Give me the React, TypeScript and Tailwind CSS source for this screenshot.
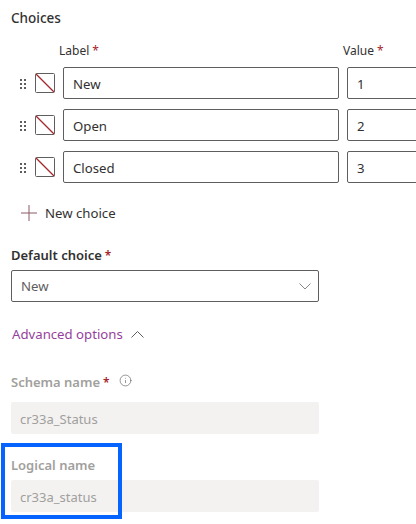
import { Info } from "lucide-react";

const choices = [
  { label: "New", value: "1" },
  { label: "Open", value: "2" },
  { label: "Closed", value: "3" },
];

function Required() {
  return <span className="text-[#a4262c] ml-[3px] text-[12px]">*</span>;
}

function DragDots() {
  return (
    <svg width="6" height="10" viewBox="0 0 6 10" className="fill-[#605e5c] shrink-0 mt-[2px]">
      {[0, 4, 8].map((y) => (
        <g key={y}>
          <rect x="0" y={y} width="2" height="2" />
          <rect x="4" y={y} width="2" height="2" />
        </g>
      ))}
    </svg>
  );
}

function Swatch() {
  return (
    <svg width="20" height="20" viewBox="0 0 20 20" className="shrink-0 ml-[9px] mr-2">
      <rect x="0.5" y="0.5" width="19" height="19" rx="1" fill="#fff" stroke="#605e5c" />
      <path d="M1 1 L19 19" stroke="#a4262c" strokeWidth="1.2" />
    </svg>
  );
}

function ChoiceRow({ label, value }: { label: string; value: string }) {
  return (
    <div className="flex items-center h-8 pl-5">
      <DragDots />
      <Swatch />
      <div className="w-[276px] h-8 shrink-0 border border-[#605e5c] rounded-[2px] pl-[9px] pt-[2px] flex items-center text-[#323130]">
        {label}
      </div>
      <div className="w-[100px] h-8 shrink-0 ml-2 border border-[#605e5c] rounded-[2px] pl-[9px] pt-[2px] flex items-center text-[#323130]">
        {value}
      </div>
    </div>
  );
}

function ReadOnlyField({ value }: { value: string }) {
  return (
    <div className="w-[308px] h-8 bg-[#f3f2f1] rounded-[2px] pl-[9px] pt-[2px] flex items-center text-[13px] text-[#a19f9d]">
      {value}
    </div>
  );
}

export default function App() {
  return (
    <div
      className="relative w-[416px] h-[524px] overflow-hidden bg-white text-[13.2px] leading-5 text-[#323130]"
      style={{ fontFamily: '"Noto Sans", sans-serif' }}
    >
      <div className="pt-2">
        <div className="pl-[11px] font-medium h-5 text-[13.5px]">Choices</div>

        <div className="flex mt-[13px] h-5 text-[#323130] text-[12px]">
          <div className="pl-[59px] w-[343px] shrink-0">
            Label<Required />
          </div>
          <div>
            Value<Required />
          </div>
        </div>

        <div className="flex flex-col gap-[10px] mt-[6px] w-[480px]">
          {choices.map((c) => (
            <ChoiceRow key={c.value} label={c.label} value={c.value} />
          ))}
        </div>

        <div className="flex items-center h-8 pl-[21px] mt-[14px] gap-2 text-[#323130]">
          <svg width="16" height="16" viewBox="0 0 16 16" className="text-[#8a5a66] shrink-0" fill="none" stroke="currentColor" strokeWidth="1">
            <path d="M8 0 V16 M0 8 H16" />
          </svg>
          <span>New choice</span>
        </div>

        <div className="pl-[11px] mt-[16px]">
          <div className="font-semibold h-5 text-[13px]">
            Default choice<Required />
          </div>
          <div className="w-[308px] h-8 mt-[5px] border border-[#605e5c] rounded-[2px] pl-[9px] pr-[7px] flex items-center justify-between text-[#605e5c]">
            <span>New</span>
            <svg width="12" height="7" viewBox="0 0 12 7" fill="none" stroke="#8a8886" strokeWidth="1">
              <path d="M0.5 0.5 L6 6 L11.5 0.5" />
            </svg>
          </div>

          <div className="flex items-center gap-2 mt-[22px] h-5 pl-px text-[#953f9c]">
            <span>Advanced options</span>
            <svg width="13" height="7" viewBox="0 0 13 7" fill="none" stroke="#605e5c" strokeWidth="1">
              <path d="M0.5 6.5 L6.5 0.5 L12.5 6.5" />
            </svg>
          </div>

          <div className="flex items-center mt-[28px] h-5 font-semibold text-[13px] text-[#a19f9d]">
            <span>
              Schema name<Required />
            </span>
            <Info size={13} strokeWidth={1.2} className="ml-[9px] -mt-[3px] text-[#605e5c]" />
          </div>
          <div className="mt-[10px]">
            <ReadOnlyField value="cr33a_Status" />
          </div>

          <div className="font-semibold text-[13px] h-5 mt-[21px] text-[#a19f9d]">Logical name</div>
          <div className="mt-[5px]">
            <ReadOnlyField value="cr33a_status" />
          </div>
        </div>
      </div>

      {/* blue highlight drawn over the screenshot */}
      <div className="absolute left-[1px] top-[443px] w-[121px] h-[76px] border-[4px] border-[#0563ff]" />
    </div>
  );
}
